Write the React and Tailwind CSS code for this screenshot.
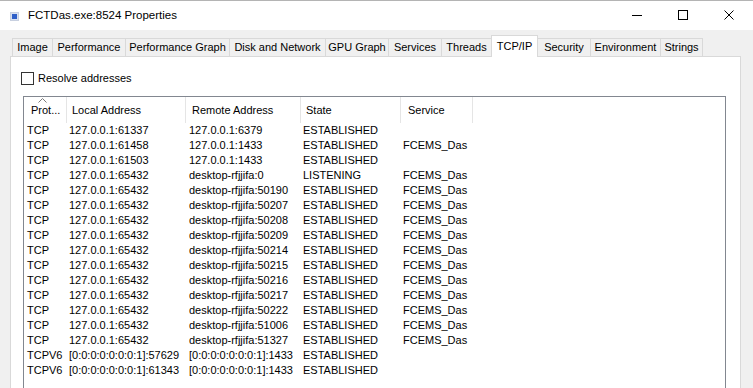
import React from "react";

const tabs = [
  ["Image", 40],
  ["Performance", 73],
  ["Performance Graph", 104],
  ["Disk and Network", 96],
  ["GPU Graph", 63],
  ["Services", 53],
  ["Threads", 50],
  ["TCP/IP", 47],
  ["Security", 52],
  ["Environment", 70],
  ["Strings", 43],
];

const rows = [
  ["TCP", "127.0.0.1:61337", "127.0.0.1:6379", "ESTABLISHED", ""],
  ["TCP", "127.0.0.1:61458", "127.0.0.1:1433", "ESTABLISHED", "FCEMS_Das"],
  ["TCP", "127.0.0.1:61503", "127.0.0.1:1433", "ESTABLISHED", ""],
  ["TCP", "127.0.0.1:65432", "desktop-rfjjifa:0", "LISTENING", "FCEMS_Das"],
  ["TCP", "127.0.0.1:65432", "desktop-rfjjifa:50190", "ESTABLISHED", "FCEMS_Das"],
  ["TCP", "127.0.0.1:65432", "desktop-rfjjifa:50207", "ESTABLISHED", "FCEMS_Das"],
  ["TCP", "127.0.0.1:65432", "desktop-rfjjifa:50208", "ESTABLISHED", "FCEMS_Das"],
  ["TCP", "127.0.0.1:65432", "desktop-rfjjifa:50209", "ESTABLISHED", "FCEMS_Das"],
  ["TCP", "127.0.0.1:65432", "desktop-rfjjifa:50214", "ESTABLISHED", "FCEMS_Das"],
  ["TCP", "127.0.0.1:65432", "desktop-rfjjifa:50215", "ESTABLISHED", "FCEMS_Das"],
  ["TCP", "127.0.0.1:65432", "desktop-rfjjifa:50216", "ESTABLISHED", "FCEMS_Das"],
  ["TCP", "127.0.0.1:65432", "desktop-rfjjifa:50217", "ESTABLISHED", "FCEMS_Das"],
  ["TCP", "127.0.0.1:65432", "desktop-rfjjifa:50222", "ESTABLISHED", "FCEMS_Das"],
  ["TCP", "127.0.0.1:65432", "desktop-rfjjifa:51006", "ESTABLISHED", "FCEMS_Das"],
  ["TCP", "127.0.0.1:65432", "desktop-rfjjifa:51327", "ESTABLISHED", "FCEMS_Das"],
  ["TCPV6", "[0:0:0:0:0:0:0:1]:57629", "[0:0:0:0:0:0:0:1]:1433", "ESTABLISHED", ""],
  ["TCPV6", "[0:0:0:0:0:0:0:1]:61343", "[0:0:0:0:0:0:0:1]:1433", "ESTABLISHED", ""],
];

const SEL = 7;

export default function App() {
  return (
    <div
      className="w-[753px] h-[388px] overflow-hidden flex flex-col bg-[#f0f0f0] text-black text-[11px]"
      style={{ fontFamily: '"Liberation Sans", Arial, sans-serif' }}
    >
      {/* Title bar */}
      <div className="h-[30px] shrink-0 bg-white border-t border-[#b4b4b4] flex items-center relative">
        <svg width="9" height="9" viewBox="0 0 9 9" className="ml-[10px] mt-[1px]">
          <rect x="0.5" y="0.5" width="8" height="8" fill="#d8e0f0" stroke="#c8d0e0" />
          <rect x="2" y="2" width="5" height="5" fill="#2f5fc8" />
        </svg>
        <span className="ml-[9px] text-[11.5px] leading-none">FCTDas.exe:8524 Properties</span>
        <div className="ml-auto flex items-center h-full">
          <div className="w-[46px] h-full flex items-center justify-center">
            <svg width="11" height="11" viewBox="0 0 11 11">
              <line x1="0" y1="5.5" x2="10" y2="5.5" stroke="#000" strokeWidth="1" />
            </svg>
          </div>
          <div className="w-[46px] h-full flex items-center justify-center">
            <svg width="11" height="11" viewBox="0 0 11 11">
              <rect x="0.5" y="0.5" width="9" height="9" fill="none" stroke="#000" strokeWidth="1" />
            </svg>
          </div>
          <div className="w-[46px] h-full flex items-center justify-center mr-[1px]">
            <svg width="11" height="11" viewBox="0 0 11 11">
              <path d="M0.5 0.5 L9.5 9.5 M9.5 0.5 L0.5 9.5" stroke="#000" strokeWidth="1" />
            </svg>
          </div>
        </div>
      </div>

      {/* Body */}
      <div className="flex-1 pl-[10px] pt-[5px] flex flex-col">
        {/* Tabs */}
        <div className="flex items-end ml-[2px] h-[21px] relative z-10">
          {tabs.map(([label, w], i) => {
            const selected = i === SEL;
            return (
              <div
                key={label}
                style={{ width: w }}
                className={
                  selected
                    ? "h-[22px] -mb-px bg-white border-l border-r border-t border-[#d9d9d9] flex items-start justify-center pt-[4px] leading-[13px] whitespace-nowrap"
                    : i === SEL + 1
                    ? "h-[18px] bg-[#f0f0f0] border-t border-[#d9d9d9] flex items-center justify-center leading-[13px] whitespace-nowrap"
                    : i === tabs.length - 1
                    ? "h-[18px] bg-[#f0f0f0] border-l border-r border-t border-[#d9d9d9] flex items-center justify-center leading-[13px] whitespace-nowrap"
                    : "h-[18px] bg-[#f0f0f0] border-l border-t border-[#d9d9d9] flex items-center justify-center leading-[13px] whitespace-nowrap"
                }
              >
                {label}
              </div>
            );
          })}
        </div>

        {/* Panel */}
        <div className="w-[731px] flex-1 bg-white border border-[#d9d9d9] pl-[10px] pt-[15px]">
          <div className="flex items-center h-[13px]">
            <div className="w-[13px] h-[13px] border border-[#333333] bg-white" />
            <span className="ml-[4px] leading-[13px]">Resolve addresses</span>
          </div>

          {/* List view */}
          <div className="mt-[11px] ml-[2px] w-[703px] h-[300px] border border-[#828790] bg-white">
            <div className="grid grid-cols-[43px_119px_115px_100px_72px] h-[26px]">
              <div className="relative border-r border-[#e5e5e5] pl-[7px] flex items-center">
                <svg width="9" height="5" viewBox="0 0 9 5" className="absolute left-[14px] top-[1px]">
                  <polyline points="0.5,4.5 4.5,0.5 8.5,4.5" fill="none" stroke="#7a7a7a" strokeWidth="1" />
                </svg>
                <span className="mt-[1px]">Prot...</span>
              </div>
              <div className="border-r border-[#e5e5e5] pl-[5px] flex items-center">Local Address</div>
              <div className="border-r border-[#e5e5e5] pl-[6px] flex items-center">Remote Address</div>
              <div className="border-r border-[#e5e5e5] pl-[5px] flex items-center">State</div>
              <div className="border-r border-[#e5e5e5] pl-[7px] flex items-center">Service</div>
            </div>
            {rows.map((r, i) => (
              <div key={i} className="grid grid-cols-[43px_119px_115px_100px_72px] h-[15px] leading-[15px] whitespace-nowrap">
                <div className="pl-[3px]">{r[0]}</div>
                <div className="pl-[2px]">{r[1]}</div>
                <div className="pl-[3px]">{r[2]}</div>
                <div className="pl-[2px]">{r[3]}</div>
                <div className="pl-[2px]">{r[4]}</div>
              </div>
            ))}
          </div>
        </div>
      </div>
    </div>
  );
}
